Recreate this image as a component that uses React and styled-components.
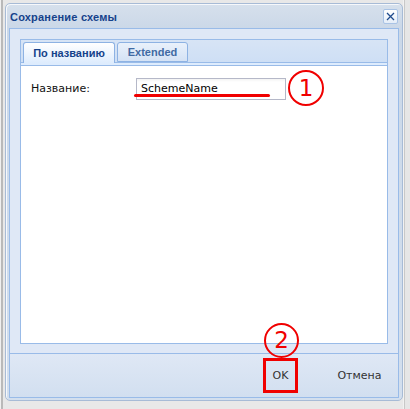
import styled, { createGlobalStyle } from "styled-components";

const GlobalStyle = createGlobalStyle`
  html, body {
    margin: 0;
    padding: 0;
  }
  body {
    background: #e6e6e6;
    font-family: "DejaVu Sans", Verdana, sans-serif;
  }
`;

const Page = styled.div`
  box-sizing: border-box;
  width: 410px;
  height: 409px;
  padding: 3px 7px 0 5px;
  background: linear-gradient(
    to right,
    #f0f0f0 0 1px,
    #b9b9b9 1px 3px,
    #e8e8e8 3px 403px,
    #f2f2f2 403px 404px,
    #c8c8c8 404px 405px,
    #e6e6e6 405px
  );
`;

const Window = styled.div`
  box-sizing: border-box;
  width: 398px;
  height: 398px;
  display: flex;
  flex-direction: column;
  border: 1px solid #a7bbd6;
  border-radius: 5px;
  padding: 0 3px 2px 3px;
  background: linear-gradient(to bottom, #d6e0ec 0, #cbd8e8 24px, #d3dfee 100%);
  box-shadow: 1px 1px 0 #f6f8fb inset;
`;

const Header = styled.div`
  height: 24px;
  display: flex;
  align-items: center;
  justify-content: space-between;
  padding: 0 1px 0 1px;
`;

const Title = styled.span`
  font-family: "Liberation Sans", Arial, sans-serif;
  font-weight: bold;
  font-size: 11px;
  letter-spacing: 0.2px;
  color: #15428b;
  padding-top: 1px;
`;

const CloseButton = styled.div`
  box-sizing: border-box;
  width: 15px;
  height: 15px;
  display: flex;
  align-items: center;
  justify-content: center;
  border: 1px solid #a9c3e5;
  border-radius: 2px;
  background: linear-gradient(to bottom, #ffffff, #e4edf8);
`;

const Frame = styled.div`
  flex: 1;
  display: flex;
  flex-direction: column;
  border: 1px solid #99bbe8;
  background: #dfe8f6;
`;

const Content = styled.div`
  flex: 1;
  display: flex;
  padding: 10px 10px 9px 10px;
`;

const TabPanel = styled.div`
  flex: 1;
  display: flex;
  flex-direction: column;
`;

const TabStrip = styled.div`
  display: flex;
  gap: 2px;
  height: 21px;
  padding: 1px 0 0 2px;
  border: 1px solid #99bbe8;
  border-bottom: none;
  background: linear-gradient(to bottom, #d7e4f5, #cedff5);
`;

const Tab = styled.div`
  box-sizing: border-box;
  width: ${(p) => p.$width}px;
  height: ${(p) => (p.$active ? 21 : 20)}px;
  margin-top: 1px;
  display: flex;
  align-items: center;
  justify-content: center;
  border: 1px solid #8db2e3;
  border-bottom: ${(p) => (p.$active ? "none" : "1px solid #8db2e3")};
  border-radius: 3px 3px 0 0;
  font-family: "Liberation Sans", Arial, sans-serif;
  font-weight: bold;
  font-size: 11px;
  color: ${(p) => (p.$active ? "#15428b" : "#416aa3")};
  background: ${(p) =>
    p.$active
      ? "linear-gradient(to bottom, #ffffff, #deecfd)"
      : "linear-gradient(to bottom, #e9f1fb, #d4e2f5)"};
  position: relative;
  z-index: 1;
`;

const StripBottom = styled.div`
  height: 2px;
  border: 1px solid #99bbe8;
  border-bottom: none;
  background: #deecfd;
`;

const TabBody = styled.div`
  flex: 1;
  border: 1px solid #99bbe8;
  background: #ffffff;
  padding: 11px 10px;
`;

const FormRow = styled.div`
  display: flex;
  align-items: center;
`;

const Label = styled.label`
  width: 105px;
  font-size: 11px;
  color: #111;
`;

const Field = styled.div`
  position: relative;
`;

const Input = styled.input`
  box-sizing: border-box;
  width: 150px;
  height: 22px;
  padding: 0 4px;
  border: 1px solid #b5b8c8;
  background: linear-gradient(to bottom, #f3f3f3 0, #ffffff 3px);
  font-family: "DejaVu Sans", Verdana, sans-serif;
  font-size: 11px;
  color: #000;
  outline: none;
`;

const Underline = styled.div`
  position: absolute;
  left: -2px;
  top: 17px;
  width: 136px;
  height: 3px;
  border-radius: 2px;
  background: #f00000;
`;

const Marker = styled.div`
  position: absolute;
  box-sizing: border-box;
  left: ${(p) => p.$left}px;
  top: ${(p) => p.$top}px;
  width: ${(p) => p.$size}px;
  height: ${(p) => p.$size}px;
  display: flex;
  align-items: center;
  justify-content: center;
  border: 2.5px solid #f00000;
  border-radius: 50%;
  font-family: "DejaVu Sans", Verdana, sans-serif;
  font-size: 23px;
  line-height: 1;
  color: #f00000;
  z-index: 2;
`;

const Footer = styled.div`
  height: 43px;
  display: flex;
  align-items: center;
  justify-content: flex-end;
  gap: 27px;
  padding-right: 4px;
  border-top: 1px solid #99bbe8;
  background: linear-gradient(to bottom, #dfe8f5, #d2dff0);
`;

const FooterButton = styled.div`
  position: relative;
  box-sizing: border-box;
  width: ${(p) => p.$width}px;
  height: 35px;
  display: flex;
  align-items: center;
  justify-content: center;
  border: ${(p) => (p.$marked ? "3px solid #f00000" : "3px solid transparent")};
  font-size: 11px;
  color: #333;
`;

export default function App() {
  return (
    <>
      <GlobalStyle />
      <Page>
        <Window>
          <Header>
            <Title>Сохранение схемы</Title>
            <CloseButton>
              <svg width="9" height="9" viewBox="0 0 9 9">
                <path d="M1 1 L8 8 M8 1 L1 8" stroke="#1f4b8c" strokeWidth="1.3" />
              </svg>
            </CloseButton>
          </Header>
          <Frame>
            <Content>
              <TabPanel>
                <TabStrip>
                  <Tab $active $width={92}>По названию</Tab>
                  <Tab $width={71}>Extended</Tab>
                </TabStrip>
                <StripBottom />
                <TabBody>
                  <FormRow>
                    <Label>Название:</Label>
                    <Field>
                      <Input defaultValue="SchemeName" />
                      <Underline />
                      <Marker $left={152} $top={-7} $size={36}>1</Marker>
                    </Field>
                  </FormRow>
                </TabBody>
              </TabPanel>
            </Content>
            <Footer>
              <FooterButton $marked $width={35}>
                OK
                <Marker $left={-2} $top={-38} $size={35}>2</Marker>
              </FooterButton>
              <FooterButton $width={69}>Отмена</FooterButton>
            </Footer>
          </Frame>
        </Window>
      </Page>
    </>
  );
}
